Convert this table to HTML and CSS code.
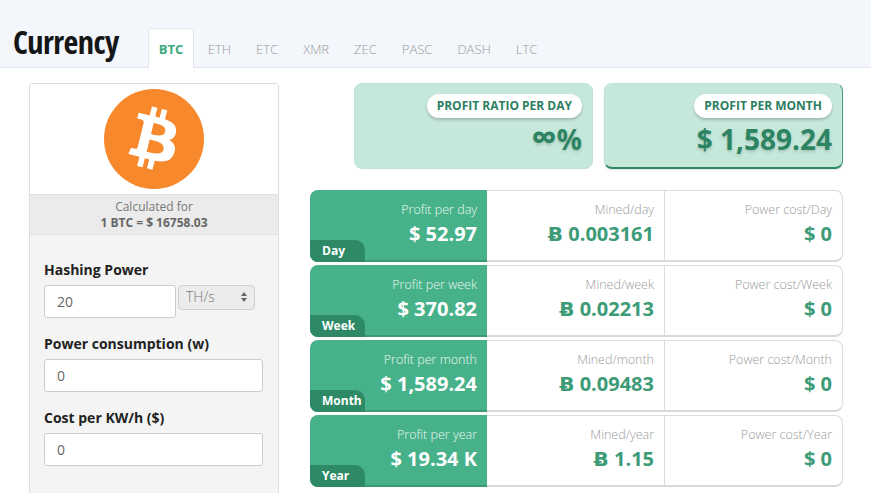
FILE: index.html
```html
<!DOCTYPE html>
<html lang="en">
<head>
<meta charset="utf-8">
<title>Currency</title>
<link rel="stylesheet" href="styles.css">
</head>
<body>
<header class="topbar">
  <h1 class="title">Currency</h1>
  <nav class="tabs">
    <a class="tab active">BTC</a>
    <a class="tab">ETH</a>
    <a class="tab">ETC</a>
    <a class="tab">XMR</a>
    <a class="tab">ZEC</a>
    <a class="tab">PASC</a>
    <a class="tab">DASH</a>
    <a class="tab">LTC</a>
  </nav>
</header>
<main class="content">
  <aside class="panel">
    <div class="logo-box">
      <svg class="logo" viewBox="0 0 64 64" width="100" height="100">
        <circle cx="32" cy="32" r="32" fill="#f7882c"/>
        <path fill="#fff" d="M46.11 27.441c.636-4.258-2.606-6.547-7.039-8.074l1.438-5.768-3.512-.875-1.4 5.616c-.922-.23-1.87-.447-2.812-.662l1.41-5.653-3.509-.875-1.439 5.766c-.764-.174-1.514-.346-2.242-.527l.004-.018-4.842-1.209-.934 3.75s2.605.597 2.55.634c1.422.355 1.679 1.296 1.636 2.042l-1.638 6.571c.098.025.225.061.365.117l-.371-.092-2.297 9.205c-.174.432-.615 1.08-1.609.834.035.051-2.552-.637-2.552-.637l-1.743 4.019 4.569 1.139c.85.213 1.683.436 2.503.646l-1.453 5.834 3.507.875 1.439-5.772c.958.26 1.888.5 2.798.726l-1.434 5.745 3.511.875 1.453-5.823c5.987 1.133 10.489.676 12.384-4.739 1.527-4.360-.076-6.875-3.226-8.515 2.294-.529 4.022-2.038 4.483-5.155zM38.087 38.69c-1.085 4.36-8.426 2.003-10.806 1.412l1.928-7.729c2.38.594 10.012 1.770 8.878 6.317zm1.086-11.312c-.99 3.966-7.1 1.951-9.082 1.457l1.748-7.01c1.982.494 8.365 1.416 7.334 5.553z"/>
      </svg>
    </div>
    <div class="rate">
      <div class="rate-label">Calculated for</div>
      <div class="rate-value">1 BTC = $ 16758.03</div>
    </div>
    <form class="form">
      <label class="field-label">Hashing Power</label>
      <div class="inline">
        <input class="input short" type="text" value="20">
        <div class="select"><span>TH/s</span>
          <svg class="arrows" viewBox="0 0 6 10" width="6" height="10"><path d="M3 0L6 4H0z M3 10L0 6H6z" fill="#666"/></svg>
        </div>
      </div>
      <label class="field-label">Power consumption (w)</label>
      <input class="input" type="text" value="0">
      <label class="field-label">Cost per KW/h ($)</label>
      <input class="input" type="text" value="0">
    </form>
  </aside>
  <section class="results">
    <div class="summary">
      <div class="card">
        <span class="pill">PROFIT RATIO PER DAY</span>
        <div class="card-value"><span class="inf">&infin;</span>%</div>
      </div>
      <div class="card selected">
        <span class="pill">PROFIT PER MONTH</span>
        <div class="card-value">$ 1,589.24</div>
      </div>
    </div>
    <div class="rows">
      <div class="row">
        <div class="cell main"><div class="lbl">Profit per day</div><div class="val">$ 52.97</div><span class="badge">Day</span></div>
        <div class="cell info"><div class="lbl">Mined/day</div><div class="val">Ƀ 0.003161</div></div>
        <div class="cell info last"><div class="lbl">Power cost/Day</div><div class="val">$ 0</div></div>
      </div>
      <div class="row">
        <div class="cell main"><div class="lbl">Profit per week</div><div class="val">$ 370.82</div><span class="badge">Week</span></div>
        <div class="cell info"><div class="lbl">Mined/week</div><div class="val">Ƀ 0.02213</div></div>
        <div class="cell info last"><div class="lbl">Power cost/Week</div><div class="val">$ 0</div></div>
      </div>
      <div class="row">
        <div class="cell main"><div class="lbl">Profit per month</div><div class="val">$ 1,589.24</div><span class="badge">Month</span></div>
        <div class="cell info"><div class="lbl">Mined/month</div><div class="val">Ƀ 0.09483</div></div>
        <div class="cell info last"><div class="lbl">Power cost/Month</div><div class="val">$ 0</div></div>
      </div>
      <div class="row">
        <div class="cell main"><div class="lbl">Profit per year</div><div class="val">$ 19.34 K</div><span class="badge">Year</span></div>
        <div class="cell info"><div class="lbl">Mined/year</div><div class="val">Ƀ 1.15</div></div>
        <div class="cell info last"><div class="lbl">Power cost/Year</div><div class="val">$ 0</div></div>
      </div>
    </div>
  </section>
</main>
</body>
</html>
```
FILE: styles.css
```css
* { box-sizing: border-box; }
html, body { margin: 0; padding: 0; }
body {
  font-family: "Open Sans", "DejaVu Sans", sans-serif;
  color: #333;
  background: #fff;
  width: 871px;
  height: 493px;
  overflow: hidden;
}
.topbar {
  height: 68px;
  background: #f3f7fc;
  border-bottom: 1px solid #e2e7ee;
  display: flex;
  align-items: flex-end;
  padding-left: 13px;
}
.title {
  margin: 0 29px 3px 0;
  font-family: "Open Sans Condensed", "Open Sans", sans-serif;
  font-stretch: 75%;
  font-weight: 700;
  font-size: 32px;
  line-height: 44px;
  color: #161616;
  letter-spacing: -0.5px;
}
.tabs {
  display: flex;
  margin-bottom: -1px;
}
.tab {
  display: block;
  height: 40px;
  line-height: 40px;
  padding: 0 11.5px;
  font-size: 13px;
  font-weight: 300;
  color: #999;
  border: 1px solid transparent;
  border-bottom: none;
  border-radius: 4px 4px 0 0;
}
.tab.active {
  background: #fff;
  border-color: #e2e7ee;
  color: #3aa97d;
  font-weight: 700;
  padding: 0 10px;
  margin-right: 1px;
}
.content {
  display: flex;
  padding: 15px 0 0 29px;
}
.panel {
  width: 250px;
  flex: none;
  height: 430px;
  border: 1px solid #dedede;
  border-radius: 3px 3px 0 0;
  background: #f4f4f4;
}
.logo-box {
  background: #fff;
  height: 110px;
  display: flex;
  justify-content: center;
  align-items: center;
}
.logo { display: block; }
.rate {
  background: #ebebeb;
  border-top: 1px solid #e0e0e0;
  border-bottom: 1px solid #e0e0e0;
  height: 41px;
  text-align: center;
  font-size: 12px;
  line-height: 16px;
  padding-top: 4px;
  color: #777;
}
.rate-value { font-weight: 700; color: #666; }
.form {
  padding: 25px 15px 0 14px;
  display: flex;
  flex-direction: column;
}
.field-label {
  font-size: 14px;
  font-weight: 700;
  line-height: 20px;
  color: #222;
  margin-bottom: 5px;
}
.inline { display: flex; align-items: flex-start; margin-bottom: 16px; gap: 2px; }
.input {
  height: 33px;
  border: 1px solid #cdcdcd;
  border-radius: 3px;
  background: #fff;
  font-family: inherit;
  font-size: 14px;
  font-weight: 400;
  color: #666;
  padding: 0 12px;
  margin: 0 0 16px 0;
  width: 219px;
}
.inline .input { margin: 0; width: 132px; }
.select {
  width: 77px;
  height: 25px;
  border: 1px solid #cfcfcf;
  border-radius: 4px;
  background: #ececec;
  font-size: 14px;
  font-weight: 300;
  color: #777;
  line-height: 21px;
  padding: 0 7px;
  display: flex;
  justify-content: space-between;
  align-items: flex-start;
}
.arrows { display: block; margin-top: 6px; }
.results {
  margin-left: 31px;
  width: 533px;
}
.summary {
  display: flex;
  gap: 11px;
  padding-left: 44px;
}
.card {
  width: 240px;
  height: 86px;
  background: #c5e8da;
  border-radius: 8px;
  display: flex;
  flex-direction: column;
  align-items: flex-end;
  padding: 10px 10px 0 0;
  border: 1px solid #bfe3d4;
}
.card.selected {
  border-bottom: 2px solid #2e8a66;
  border-right: 1px solid #4a9e7e;
  box-shadow: 0 1px 2px rgba(0,0,0,.12);
}
.pill {
  background: #fff;
  border-radius: 12px;
  box-shadow: 0 2px 3px rgba(0,0,0,.2);
  font-size: 12px;
  font-weight: 700;
  color: #2b7f5f;
  height: 24px;
  line-height: 24px;
  padding: 0 10px;
}
.card-value {
  font-size: 28px;
  font-weight: 700;
  color: #2d8462;
  line-height: 38px;
  margin-top: 2px;
  text-shadow: 0 2px 3px rgba(0,0,0,.15);
}
.inf { font-size: 36px; line-height: 30px; }
.rows {
  margin-top: 21px;
  display: flex;
  flex-direction: column;
  gap: 3px;
}
.row {
  display: grid;
  grid-template-columns: 177px 178px 178px;
  height: 72px;
}
.cell {
  position: relative;
  text-align: right;
  padding: 10px 10px 0 0;
}
.cell.main {
  background: #47b28a;
  border-radius: 8px 0 0 8px;
  border-bottom: 2px solid #3a9b76;
  color: #fff;
}
.cell.info {
  background: #fff;
  border-top: 1px solid #dcdcdc;
  border-bottom: 2px solid #d9d9d9;
  border-right: 1px solid #dcdcdc;
  padding-top: 9px;
}
.cell.last { border-radius: 0 8px 8px 0; }
.lbl {
  font-size: 12.5px;
  font-weight: 300;
  line-height: 20px;
  color: #9a9a9a;
}
.cell.main .lbl { color: #eef8f3; }
.val {
  font-size: 20px;
  font-weight: 700;
  line-height: 28px;
  color: #3d9b77;
}
.cell.main .val { color: #fff; }
.badge {
  position: absolute;
  left: 0;
  bottom: -2px;
  width: 55px;
  height: 22px;
  line-height: 22px;
  padding-left: 12px;
  text-align: left;
  background: #2e8a66;
  border-radius: 0 10px 0 8px;
  font-size: 12px;
  font-weight: 700;
  color: #fff;
}
```
